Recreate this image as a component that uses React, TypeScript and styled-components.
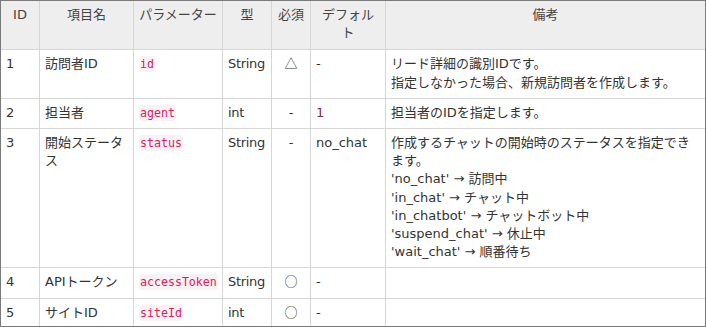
import React from 'react';
import styled, { createGlobalStyle } from 'styled-components';

const GlobalStyle = createGlobalStyle`
  html, body {
    margin: 0;
    padding: 0;
    background: #ffffff;
  }
  body {
    font-family: 'DejaVu Sans', 'Noto Sans CJK JP', sans-serif;
    font-size: 13px;
    color: #333333;
  }
  * {
    box-sizing: border-box;
  }
`;

export const Frame = styled.div`
  width: 706px;
  height: 327px;
  border: 1px solid #7a7a7a;
  overflow: hidden;
  background: #ffffff;
`;

export const ParamTable = styled.table`
  width: 704px;
  table-layout: fixed;
  border-collapse: separate;
  border-spacing: 0;
  line-height: 18.2px;

  tr:last-child td {
    border-bottom: none;
  }
  th:last-child,
  td:last-child {
    border-right: none;
  }
`;

export const HeadCell = styled.th`
  background: #eeeeee;
  color: #444444;
  font-weight: normal;
  text-align: center;
  vertical-align: top;
  padding: 5px 5px 7px;
  height: 48px;
  border-right: 1px solid #d6d6d6;
  border-bottom: 1px solid #d6d6d6;
`;

type CellProps = { $center?: boolean };

export const Cell = styled.td<CellProps>`
  text-align: ${p => (p.$center ? 'center' : 'left')};
  vertical-align: top;
  padding: 5px 5px 6px;
  border-right: 1px solid #d6d6d6;
  border-bottom: 1px solid #d6d6d6;
  line-break: strict;
`;

export const Line = styled.div`
  height: 18.2px;
  white-space: nowrap;
`;

export const TypeName = styled.span`
  white-space: nowrap;
  letter-spacing: -0.3px;
`;

export const Code = styled.code`
  font-family: 'DejaVu Sans Mono', monospace;
  font-size: 11.6px;
  line-height: 1;
  color: #d0245a;
  background: #faf1f4;
  border-radius: 3px;
  padding: 1px 1px;
  white-space: nowrap;
`;

export const Num = styled.span`
  color: #86235a;
`;

export const Mark = styled.span`
  font-family: 'Noto Sans CJK JP', sans-serif;
  font-size: 13px;
  line-height: 1;
`;

export const Note = styled.div``;

const widths = [39, 94, 89, 49, 39, 75, 319];
const headers = ['ID', '項目名', 'パラメーター', '型', '必須', 'デフォルト', '備考'];

type Row = {
  id: number;
  name: string;
  param: string;
  type: string;
  required: React.ReactNode;
  def: React.ReactNode;
  notes: string[];
};

const rows: Row[] = [
  {
    id: 1,
    name: '訪問者ID',
    param: 'id',
    type: 'String',
    required: <Mark>△</Mark>,
    def: '-',
    notes: ['リード詳細の識別IDです。', '指定しなかった場合、新規訪問者を作成します。'],
  },
  {
    id: 2,
    name: '担当者',
    param: 'agent',
    type: 'int',
    required: '-',
    def: <Num>1</Num>,
    notes: ['担当者のIDを指定します。'],
  },
  {
    id: 3,
    name: '開始ステータス',
    param: 'status',
    type: 'String',
    required: '-',
    def: 'no_chat',
    notes: [
      '作成するチャットの開始時のステータスを指定できます。',
      "'no_chat' → 訪問中",
      "'in_chat' → チャット中",
      "'in_chatbot' → チャットボット中",
      "'suspend_chat' → 休止中",
      "'wait_chat' → 順番待ち",
    ],
  },
  {
    id: 4,
    name: 'APIトークン',
    param: 'accessToken',
    type: 'String',
    required: <Mark>○</Mark>,
    def: '-',
    notes: [],
  },
  {
    id: 5,
    name: 'サイトID',
    param: 'siteId',
    type: 'int',
    required: <Mark>○</Mark>,
    def: '-',
    notes: [],
  },
];

export const App: React.FC = () => {
  return (
    <>
      <GlobalStyle />
      <Frame>
        <ParamTable>
          <colgroup>
            {widths.map((w, i) => (
              <col key={i} style={{ width: w }} />
            ))}
          </colgroup>
          <thead>
            <tr>
              {headers.map(h => (
                <HeadCell key={h}>{h}</HeadCell>
              ))}
            </tr>
          </thead>
          <tbody>
            {rows.map(row => (
              <tr key={row.id}>
                <Cell>{row.id}</Cell>
                <Cell>{row.name}</Cell>
                <Cell>
                  <Line>
                    <Code>{row.param}</Code>
                  </Line>
                </Cell>
                <Cell>
                  <TypeName>{row.type}</TypeName>
                </Cell>
                <Cell $center>
                  <Line>{row.required}</Line>
                </Cell>
                <Cell>{row.def}</Cell>
                <Cell>
                  {row.notes.map(n => (
                    <Note key={n}>{n}</Note>
                  ))}
                </Cell>
              </tr>
            ))}
          </tbody>
        </ParamTable>
      </Frame>
    </>
  );
};

export default App;
